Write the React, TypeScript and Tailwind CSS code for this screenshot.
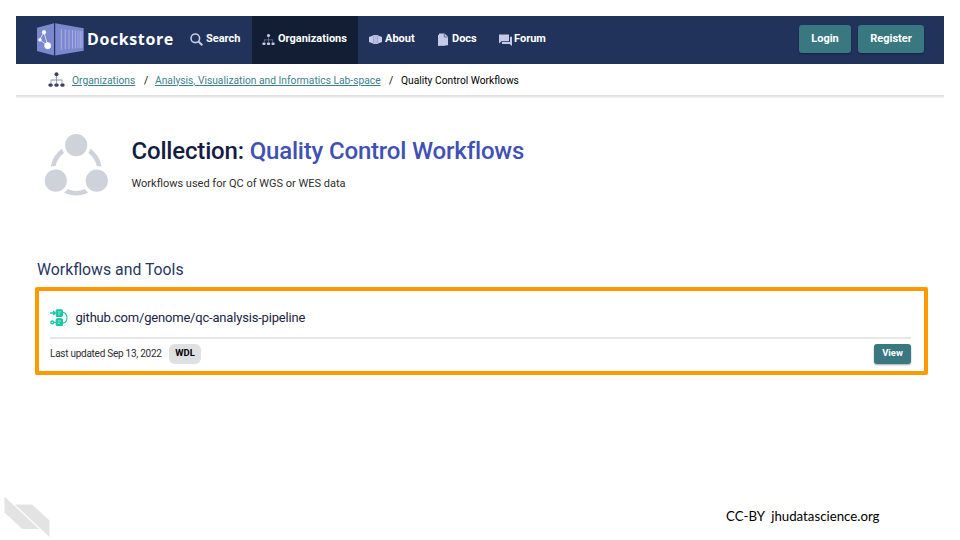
import React from "react";

const T = ({ w, className, children }: { w: number; className: string; children: React.ReactNode }) => (
  <span className={`block shrink-0 whitespace-nowrap ${className}`} style={{ width: w }}>{children}</span>
);

const OrgIcon = ({ className }: { className: string }) => (
  <svg className={className} viewBox="0 0 16 16" fill="currentColor">
    <circle cx="8" cy="3" r="1.9" />
    <path opacity=".55" d="M7.6 4.5h.8v3.6h5.2v3.4h-.8V8.9H3.2v2.6h-.8V8.1h5.2z" />
    <rect x=".4" y="11.8" width="4" height="3" rx="1.3" />
    <rect x="6" y="11.8" width="4" height="3" rx="1.3" />
    <rect x="11.6" y="11.8" width="4" height="3" rx="1.3" />
    <path opacity=".55" d="M7.6 8.5h.8v3.3h-.8z" />
  </svg>
);

const Logo = () => (
  <svg className="h-[34px] w-12 shrink-0" viewBox="36 22.5 48 34">
    <path d="M37 27.2 54 22.8V55L37 50.6z" fill="#7b88d0" />
    <path d="M55.2 22.8 83.7 27.8V50.2L55.2 55z" fill="#7b88d0" />
    <g stroke="#b5bee8" strokeWidth=".8">
      <path d="M61.3 28.6v20.6M65.3 29v19.8M69 29.3v19.2M72.4 29.6v18.6M75.3 29.9v18M78 30.2v17.4M80.2 30.4v17M82 30.6v16.6" />
    </g>
    <g fill="#fff" stroke="#fff" strokeWidth=".7">
      <path d="M44 31.7 39.7 39.3 47.7 45z" fill="none" />
      <circle cx="44" cy="31.7" r="1.8" />
      <circle cx="39.9" cy="39.3" r="1.4" />
      <circle cx="47.7" cy="45.2" r="3.1" />
    </g>
  </svg>
);

const btn = "flex items-center justify-center rounded-[3px] bg-[#397881] font-bold text-white shadow-[0_1px_2px_rgba(0,0,0,0.35)]";

export default function App() {
  return (
    <div className="flex h-[540px] w-[960px] flex-col overflow-hidden bg-white font-['Roboto',sans-serif] text-black">
      <header className="mx-4 mt-4 flex h-12 shrink-0 items-center bg-[#21335b] pl-5 text-[11px] leading-[14px] font-bold text-white">
        <Logo />
        <T w={103} className="-mt-[2px] pl-[3px] font-['Open_Sans',sans-serif] text-[16px] leading-5 tracking-[0.6px]">Dockstore</T>
        <div className="-mt-[2px] flex w-[65px] items-center gap-[3px] pl-[3px]">
          <svg className="mt-px h-[13px] w-[13px]" viewBox="0 0 13 13" fill="none" stroke="#c5cae9" strokeWidth="1.6"><circle cx="5.3" cy="5.3" r="4.3" /><path d="m8.4 8.5 3.9 3.8" strokeWidth="2" /></svg>
          <span>Search</span>
        </div>
        <div className="flex h-12 w-[106px] items-center gap-[3px] bg-[#121e33] pb-[2px] pl-[10px]">
          <OrgIcon className="mt-px h-[13px] w-[13px] text-[#c5cae9]" />
          <span>Organizations</span>
        </div>
        <div className="-mt-[2px] flex w-20 items-center gap-[3px] pl-[11px]">
          <svg className="mt-px h-[9px] w-[13px]" viewBox="0 0 13 9" fill="#c5cae9"><path d="M0 1.9 4 .4v8.2L0 7z" /><path d="M4 0h5v9H4z" fill="#b5bce2" /><path d="m9 .4 4 1.5V7L9 8.6z" /><path d="M4.5.5v8M8.7.5v8" stroke="#8490c4" strokeWidth=".5" /></svg>
          <span>About</span>
        </div>
        <div className="-mt-[2px] flex w-[61px] items-center gap-1">
          <svg className="h-[13px] w-[10px]" viewBox="0 0 10 13" fill="#c5cae9"><path d="M0 2h1v10.2h6.5v.8H0z" /><path d="M1 .4h5.5L10 3.8v8.4H1z" /><path d="M6.3.7V4h3.4" fill="none" stroke="#4b588d" strokeWidth=".8" /></svg>
          <span>Docs</span>
        </div>
        <div className="-mt-[2px] flex items-center gap-[3px]">
          <svg className="mt-px h-[12px] w-[13px]" viewBox="0 0 13 13" preserveAspectRatio="none" fill="#c5cae9"><path d="M0 .5h10v7.3H2.5L0 10.2z" /><path d="M11 3h2v10l-2.4-2.3H3V8.8h8z" /></svg>
          <span className="-ml-px">Forum</span>
        </div>
        <div className="mr-5 ml-auto flex gap-[7px] pb-[3px]">
          <button className={`h-7 w-[52px] ${btn}`}>Login</button>
          <button className={`h-7 w-[66px] ${btn}`}>Register</button>
        </div>
      </header>
      <nav className="mx-4 flex h-[31px] shrink-0 items-center pl-8 text-[10.25px] leading-3">
        <OrgIcon className="h-[17px] w-[17px] text-[#3a4360]" />
        <T w={79} className="mt-[2px] pl-[7px] text-[#3c818a] underline">Organizations</T>
        <T w={11} className="mt-[2px]">/</T>
        <T w={234} className="mt-[2px] text-[#3c818a] underline">Analysis, Visualization and Informatics Lab-space</T>
        <T w={12} className="mt-[2px]">/</T>
        <span className="mt-[2px]">Quality Control Workflows</span>
      </nav>
      <div className="mx-4 h-[3px] shrink-0 bg-gradient-to-b from-[#dadcdf] to-[#f4f5f6]" />
      <section className="flex h-[162px] shrink-0 pt-9 pl-[44px]">
        <svg className="h-[62px] w-16" viewBox="0 0 64 62" fill="#ced2db">
          <circle cx="32.2" cy="36" r="23.2" fill="none" stroke="#ced2db" strokeWidth="4.6" />
          <g stroke="white" strokeWidth="7" paintOrder="stroke">
            <circle cx="32.2" cy="11.1" r="11.1" />
            <circle cx="11.8" cy="46.7" r="11.1" />
            <circle cx="52.8" cy="46.7" r="11.1" />
          </g>
        </svg>
        <div className="pt-[2px] pl-[23.5px]">
          <h1 className="text-[24px] leading-[31px] font-medium tracking-[-0.18px] whitespace-nowrap text-[#151c42]">Collection: <span className="text-[#3f51b5]">Quality Control Workflows</span></h1>
          <p className="mt-[9px] text-[11px] leading-4 text-[#2d2d2d]">Workflows used for QC of WGS or WES data</p>
        </div>
      </section>
      <h2 className="ml-[37px] h-[27px] shrink-0 text-[15.8px] leading-5 text-[#273762]">Workflows and Tools</h2>
      <section className="ml-[35px] flex h-[88px] w-[893px] shrink-0 flex-col rounded-[2px] border-4 border-[#ff9900] pr-[13px] pl-[11px]">
        <div className="flex h-[48px] shrink-0 items-end border-b-2 border-[#e5e7e9] pb-[10px]">
          <svg className="h-[18px] w-[18px]" viewBox="0 0 18 18" fill="none" stroke="#1bc5a4" strokeWidth="1.1">
            <rect x="6.2" y=".8" width="6.2" height="6.6" rx="1" fill="#1bc5a4" />
            <rect x="6.2" y="9.8" width="6.2" height="6.6" rx="1" fill="#1bc5a4" />
            <path d="M0 4h5M3.2 2 5.2 4l-2 2" strokeWidth="1.4" />
            <path d="M13 3.2C18.3 4.5 18.3 13 13 14" />
            <circle cx="2.2" cy="13.4" r="1.4" strokeWidth="1.3" /><path d="M3.5 13.4H6" strokeWidth="1.3" />
            <path d="M7.8 3h3.2M7.8 5.2h2.2M7.8 12h3.2M7.8 14.2h2.2" stroke="#fff" strokeOpacity=".7" strokeWidth=".8" />
          </svg>
          <span className="pl-[7.5px] text-[13px] leading-[18px] tracking-[-0.19px] text-[#1c2445]">github.com/genome/qc-analysis-pipeline</span>
        </div>
        <div className="flex h-[29px] shrink-0 items-center text-[9.45px] text-[#2d2d2d]">
          <T w={119} className="text-[10px] tracking-[-0.26px]">Last updated Sep 13, 2022</T>
          <span className="flex h-5 w-8 items-center justify-center rounded-[6px] bg-[#dfe0e2] font-bold text-black">WDL</span>
          <button className={`ml-auto h-5 w-[37px] ${btn}`}>View</button>
        </div>
      </section>
      <footer className="mt-auto flex h-[56px] shrink-0">
        <svg className="h-[56px] w-[60px]" viewBox="0 484 60 56" fill="#e3e3e3">
          <path d="M4.5 496.5 39 529H22.3L4.5 512.5z" />
          <path d="M14.8 504.4H32L49.5 520.5V537z" />
        </svg>
        <span className="ml-[666px] pt-[22px] font-['Lato',sans-serif] text-[13.25px] leading-5 whitespace-pre">CC-BY  jhudatascience.org</span>
      </footer>
    </div>
  );
}
